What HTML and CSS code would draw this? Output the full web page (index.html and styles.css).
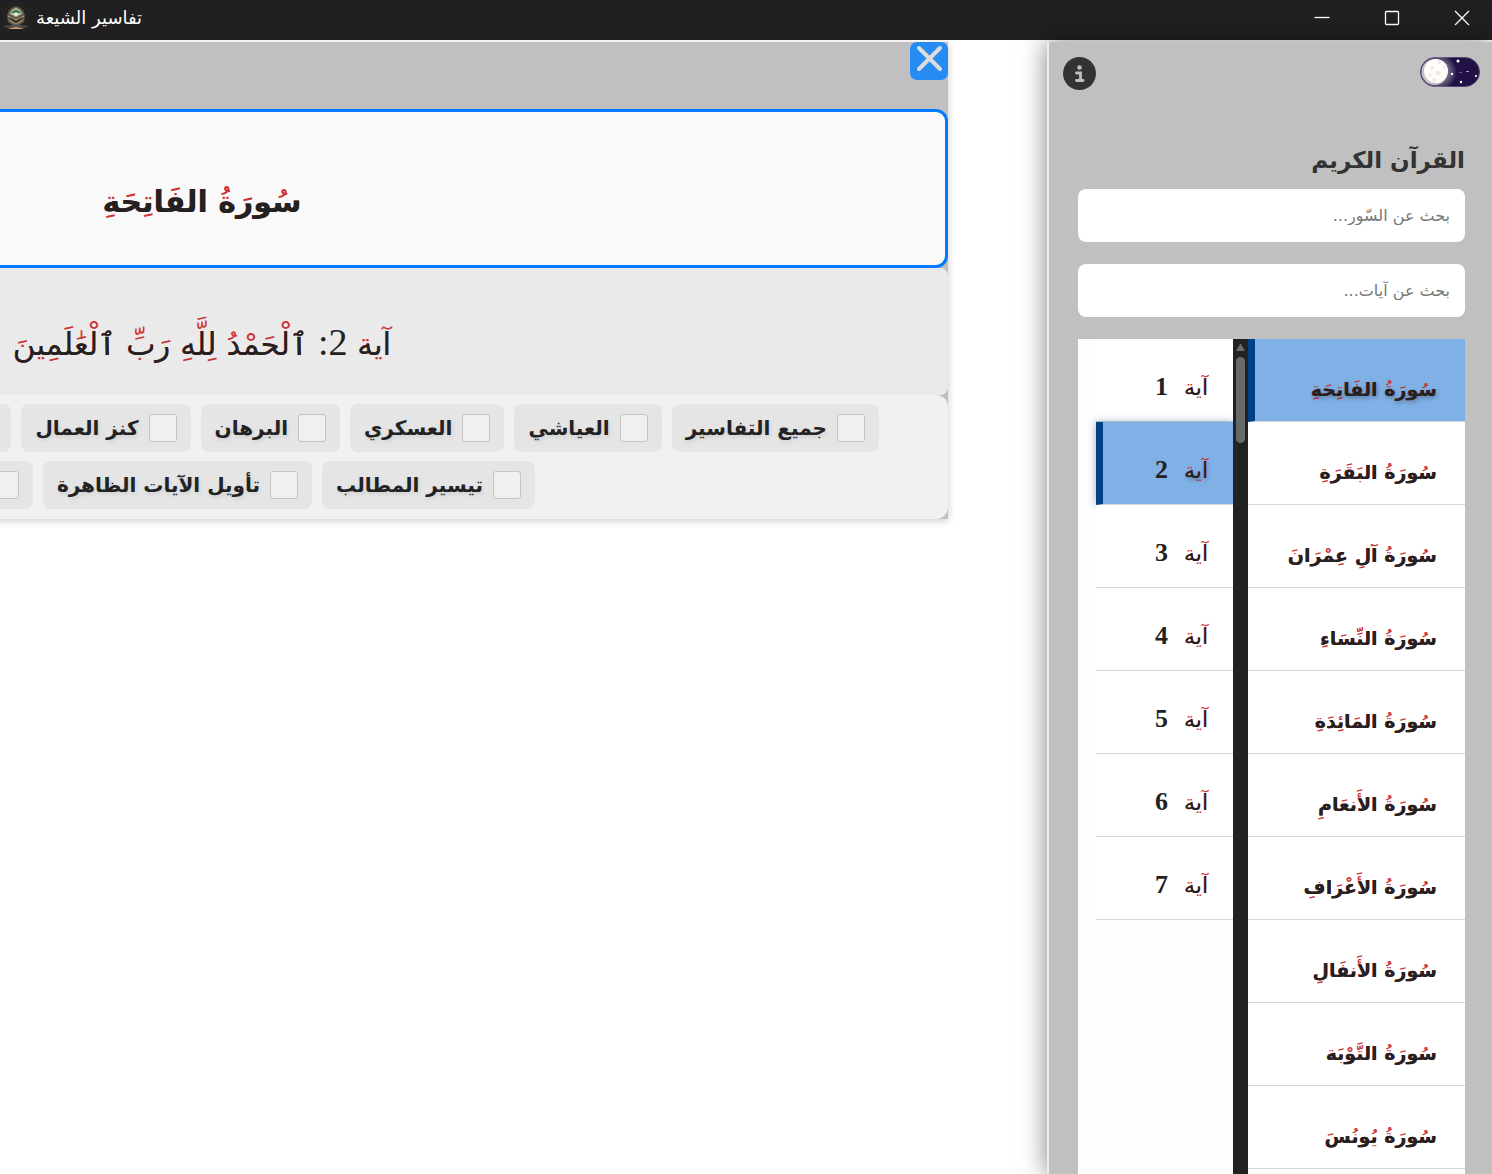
FILE: index.html
```
<!DOCTYPE html>
<html lang="ar" dir="rtl">
<head>
  <meta charset="UTF-8" />
  <meta name="viewport" content="width=device-width, initial-scale=1.0"/>
  <title>تفاسير الشيعة</title>
  <link rel="stylesheet" href="styles.css">
</head>
<body>
  <header class="titlebar" dir="ltr">
    <svg class="app-icon" viewBox="0 0 24 24">
      <rect width="24" height="24" fill="#25231f"/>
      <path d="M3 11 Q4 3 12 1 Q20 3 21 11 L20 17 L12 22 L4 17 Z" fill="#615a48"/>
      <path d="M6 9 Q7 4 12 3 Q17 4 18 9 L12 12 Z" fill="#a9b896"/>
      <path d="M7 7 L12 5 L17 7 L15 8 L12 7 L9 8 Z" fill="#2f6a45"/>
      <path d="M9 9 L12 8 L15 9 L12 11 Z" fill="#f2f0e0"/>
      <path d="M4 11 L12 15 L20 11 M5 15 L12 19 L19 15" fill="none" stroke="#b59d78" stroke-width="1"/>
      <path d="M6 13 L12 17 L18 13" fill="none" stroke="#37352b" stroke-width="2"/>
      <path d="M0 21 L9 20 L15 20 L24 21 V22 L15 23 H9 L0 22 Z" fill="#47525a"/>
      <path d="M3 24 L12 22 L21 24 Z" fill="#d69b57"/>
    </svg>
    <span class="app-name">تفاسير الشيعة</span>
    <div class="window-buttons">
      <button aria-label="minimize"><svg viewBox="0 0 16 16"><path d="M0.5 7.5 H15.5"/></svg></button>
      <button aria-label="maximize"><svg viewBox="0 0 16 16"><rect x="1.5" y="1.5" width="13" height="13" rx="1"/></svg></button>
      <button aria-label="close"><svg viewBox="0 0 16 16"><path d="M1 1 L15 15 M15 1 L1 15"/></svg></button>
    </div>
  </header>

  <div class="layout">
    <aside class="sidebar">
      <div class="sidebar-top">
        <button class="theme-toggle" aria-label="theme">
          <svg viewBox="0 0 60 30">
            <defs>
              <radialGradient id="glow">
                <stop offset="0.6" stop-color="#b7aec4"/>
                <stop offset="1" stop-color="#b7aec4" stop-opacity="0"/>
              </radialGradient>
              <clipPath id="pill"><rect width="60" height="30" rx="15"/></clipPath>
            </defs>
            <rect x="0.5" y="0.5" width="59" height="29" rx="14.5" fill="#221144" stroke="#55426f"/>
            <circle cx="18" cy="15" r="19" fill="url(#glow)" opacity="0.5" clip-path="url(#pill)"/>
            <circle cx="14.5" cy="15" r="13" fill="#c8c2c8"/>
            <circle cx="16" cy="14" r="12" fill="#fffdf8"/>
            <g fill="#f7e4ef">
              <circle cx="12" cy="11" r="1.8"/><circle cx="18" cy="16" r="2.2"/>
              <circle cx="19" cy="5" r="2"/><circle cx="10" cy="18" r="1.5"/>
              <circle cx="14" cy="23" r="2"/><circle cx="24" cy="10" r="1.5"/>
            </g>
            <g fill="#fff">
              <circle cx="38" cy="4" r="1.5"/><circle cx="32" cy="17" r="1.2"/>
              <circle cx="41" cy="25" r="1.2"/><circle cx="56" cy="19" r="1.1"/>
              <rect x="46" y="14" width="3" height="1" opacity="0.6"/>
              <rect x="39" y="15" width="3" height="1" opacity="0.3"/>
            </g>
          </svg>
        </button>
        <button class="info-btn" aria-label="info">
          <svg viewBox="0 0 33 33">
            <circle cx="16.5" cy="16.5" r="16.5" fill="#333"/>
            <circle cx="16.5" cy="10.5" r="2.3" fill="#c0c0c0"/>
            <path d="M13.5 16 H17.5 V23.5 M13.5 23.5 H20" fill="none" stroke="#c0c0c0" stroke-width="2.8" stroke-linecap="round"/>
          </svg>
        </button>
      </div>

      <h2>القرآن الكريم</h2>
      <input type="text" class="search" placeholder="بحث عن السّور..." aria-label="بحث عن السّور">
      <input type="text" class="search" placeholder="بحث عن آيات..." aria-label="بحث عن آيات">

      <div class="lists">
        <ul class="surah-list" id="surah-list"></ul>
        <div class="scrollbar">
          <div class="arrow"></div>
          <div class="thumb"></div>
        </div>
        <ul class="ayah-list" id="ayah-list"></ul>
      </div>
    </aside>

    <main class="main">
      <section class="panel">
        <div class="panel-top">
          <button class="close-btn" aria-label="إغلاق">
            <svg viewBox="0 0 38 38"><path d="M9 6 L30 27 M30 6 L9 27"/></svg>
          </button>
        </div>
        <div class="surah-title"><h1 class="marks">سُورَةُ الفَاتِحَةِ</h1></div>
        <p class="ayah-box">
          <span class="marks">آية</span>
          <span class="number">2:</span>
          <span class="marks">ٱلْحَمْدُ</span>
          <span class="marks">لِلَّهِ</span>
          <span class="marks">رَبِّ</span>
          <span class="marks">ٱلْعَٰلَمِينَ</span>
        </p>
        <div class="tafsirs">
          <div class="tafsir-row first">
            <label class="chip"><input type="checkbox">جميع التفاسير</label>
            <label class="chip"><input type="checkbox">العياشي</label>
            <label class="chip"><input type="checkbox">العسكري</label>
            <label class="chip"><input type="checkbox">البرهان</label>
            <label class="chip"><input type="checkbox">كنز العمال</label>
            <label class="chip"><input type="checkbox">القمي</label>
          </div>
          <div class="tafsir-row second">
            <label class="chip"><input type="checkbox">تيسير المطالب</label>
            <label class="chip"><input type="checkbox">تأويل الآيات الظاهرة</label>
            <label class="chip"><input type="checkbox">نور الثقلين</label>
          </div>
        </div>
      </section>
    </main>
  </div>

  <script>
    const surahs = [
      "سُورَةُ الفَاتِحَةِ",
      "سُورَةُ البَقَرَةِ",
      "سُورَةُ آلِ عِمْرَانَ",
      "سُورَةُ النِّسَاءِ",
      "سُورَةُ المَائِدَةِ",
      "سُورَةُ الأَنعَامِ",
      "سُورَةُ الأَعْرَافِ",
      "سُورَةُ الأَنفَالِ",
      "سُورَةُ التَّوْبَة",
      "سُورَةُ يُونُسَ"
    ];
    const ayahCount = 7;
    let currentSurah = 0;
    let currentAyah = 2;

    const surahList = document.getElementById("surah-list");
    const ayahList = document.getElementById("ayah-list");

    // letter shapes without their dots
    const plain = {
      "ة": "ه", "ب": "\u066E", "ت": "\u066E", "ف": "\u06A1", "ق": "\u066F",
      "ي": "\u0649", "ئ": "\u0649", "آ": "ا", "أ": "ا"
    };

    function bareText(text) {
      return text
        .replace(/[\u064B-\u0652\u0670]/g, "")
        .replace(/ن(?=[\u0621-\u064A])/g, "\u066E")
        .replace(/ن/g, "\u06BA")
        .replace(/./g, (c) => plain[c] || c);
    }

    function addItem(list, text, number, active) {
      const li = document.createElement("li");
      const span = document.createElement("span");
      span.className = "marks";
      span.textContent = text;
      li.appendChild(span);
      if (number) {
        const b = document.createElement("b");
        b.textContent = number;
        li.appendChild(b);
      }
      if (active) li.className = "active";
      list.appendChild(li);
    }

    surahs.forEach((name, i) => addItem(surahList, name, null, i === currentSurah));
    for (let i = 1; i <= ayahCount; i++) {
      addItem(ayahList, "آية", i, i === currentAyah);
    }

    // dark letters go over the red text, so only dots and vowels stay red
    document.querySelectorAll(".marks").forEach((el) => {
      el.dataset.bare = bareText(el.textContent);
    });
  </script>
</body>
</html>
```
FILE: styles.css
```
* {
  margin: 0;
  padding: 0;
  box-sizing: border-box;
}

body {
  height: 100vh;
  display: flex;
  flex-direction: column;
  overflow: hidden;
  background: #fff;
  color: #222;
  font-family: "DejaVu Sans", sans-serif;
}

button {
  border: none;
  background: none;
  cursor: pointer;
}

button svg {
  display: block;
  width: 100%;
}

.titlebar {
  height: 40px;
  flex: none;
  display: flex;
  align-items: center;
  padding-left: 4px;
  background: #202022;
  color: #fff;
}

.app-icon {
  width: 24px;
  height: 24px;
  margin-bottom: 6px;
}

.app-name {
  margin-left: 8px;
  font-size: 18px;
  line-height: 20px;
  margin-bottom: 4px;
}

.window-buttons {
  margin-left: auto;
  margin-bottom: 5px;
  display: flex;
  gap: 10px;
}

.window-buttons button {
  width: 60px;
  padding: 0 22px;
}

.window-buttons svg {
  fill: none;
  stroke: #fff;
  stroke-width: 1.3;
}

.layout {
  flex: 1;
  min-height: 0;
  display: flex;
}

.sidebar {
  width: 445px;
  flex: none;
  margin-top: 2px;
  padding: 0 27px 0 29px;
  display: flex;
  flex-direction: column;
  background: #c0c0c0;
  border-left: 2px solid #eee;
  box-shadow: 0 0 24px rgba(0, 0, 0, 0.5);
}

.sidebar-top {
  display: flex;
  justify-content: space-between;
  align-items: flex-start;
  padding-top: 15px;
  margin: 0 -15px;
}

.theme-toggle {
  width: 60px;
}

.info-btn {
  width: 33px;
}

.sidebar h2 {
  margin: 48px 0 7px;
  font-size: 23px;
  line-height: 44px;
  color: #333;
}

.search {
  width: 100%;
  height: 53px;
  flex: none;
  margin-bottom: 22px;
  padding: 0 15px;
  border: none;
  border-radius: 8px;
  background: #fff;
  font-family: "DejaVu Sans", sans-serif;
  font-size: 16px;
}

.search::placeholder {
  color: #777;
}

.lists {
  flex: 1;
  min-height: 0;
  display: flex;
  overflow: hidden;
  background: #fdfdfd;
}

.lists ul {
  list-style: none;
}

.surah-list {
  width: 217px;
  background: #fff;
}

.ayah-list {
  flex: 1;
  margin-left: 18px;
}

.lists li {
  height: 83px;
  padding: 28px 28px 0 0;
  background: #fff;
  border-bottom: 1px solid #d5d5d5;
  font-size: 19px;
  line-height: 44px;
  font-weight: bold;
}

.ayah-list li {
  padding: 26px 25px 0 0;
}

.ayah-list .marks {
  font-size: 22px;
  font-weight: normal;
}

.ayah-list b {
  margin-right: 16px;
  font-family: "Liberation Serif", serif;
  font-size: 26px;
}

.lists li.active {
  background: #7fb0e6;
  border-left: 7px solid #004085;
}

.ayah-list li.active {
  box-shadow: 0 0 8px rgba(0, 64, 133, 0.4);
}

.scrollbar {
  width: 15px;
  padding: 5px 3px;
  background: #222;
}

.arrow {
  height: 7px;
  border: 4px solid transparent;
  border-top: none;
  border-bottom: 7px solid #6a6a6a;
}

.thumb {
  height: 86px;
  margin-top: 6px;
  border-radius: 5px;
  background: #6a6a6a;
}

.marks {
  display: inline-block;
  position: relative;
  color: #c33;
}

.marks::after {
  content: attr(data-bare);
  position: absolute;
  inset: 0;
  color: #222;
  white-space: nowrap;
}

.active .marks::after {
  text-shadow: 1px 2px 4px rgba(0, 0, 0, 0.3);
}

.main {
  flex: 1;
  min-width: 0;
  padding: 2px 99px 40px 0;
  overflow: hidden;
}

.panel {
  width: 100vw;
  background: #c0c0c0;
  text-align: center;
  box-shadow: 0 2px 8px rgba(0, 0, 0, 0.2);
}

.panel-top {
  height: 67px;
  display: flex;
}

.close-btn {
  width: 38px;
  height: 38px;
  border-radius: 7px;
  background: #268bf3;
}

.close-btn svg {
  fill: none;
  stroke: #ddd;
  stroke-width: 4;
  stroke-linecap: round;
}

.surah-title {
  height: 159px;
  padding-top: 54px;
  border: 3px solid #007bff;
  border-radius: 12px;
  background: #f9f9f9;
}

.surah-title h1 {
  font-size: 30px;
  line-height: 72px;
}

.ayah-box {
  height: 127px;
  padding-top: 38px;
  border-radius: 8px;
  background: #eaeaea;
  font-size: 31px;
  line-height: 72px;
}

.number {
  font-family: "Liberation Serif", serif;
  font-size: 38px;
}

.tafsirs {
  display: flex;
  flex-direction: column;
  gap: 9px;
  padding: 9px 0 10px;
  border-radius: 12px;
  background: #f1f1f1;
}

.tafsir-row {
  display: flex;
  gap: 10px;
}

.first {
  padding-right: 69px;
}

.second {
  padding-right: 413px;
}

.chip {
  height: 48px;
  display: flex;
  align-items: center;
  gap: 10px;
  padding: 0 14px;
  border-radius: 8px;
  background: #e5e5e5;
  font-size: 20px;
  font-weight: bold;
  white-space: nowrap;
  text-shadow: 1px 2px 4px rgba(0, 0, 0, 0.1);
}

.chip input {
  appearance: none;
  width: 28px;
  height: 28px;
  border: 1px solid #c5c5c5;
  border-radius: 3px;
  background: #f0f0f0;
}
```
